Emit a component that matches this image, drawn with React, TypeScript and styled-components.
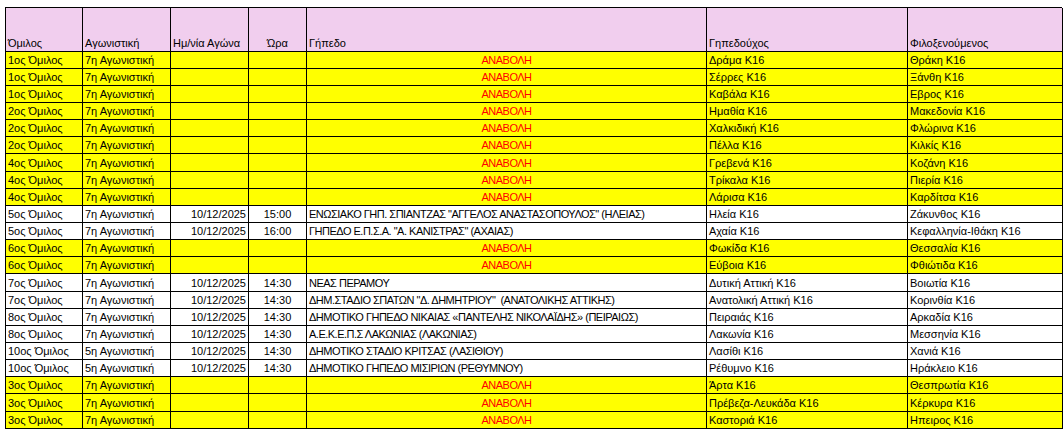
import React from "react";
import styled, { createGlobalStyle } from "styled-components";

const GlobalStyle = createGlobalStyle`
  html, body { margin: 0; padding: 0; background: #ffffff; }
  body { font-family: "Liberation Sans", Arial, sans-serif; }
`;

const COLS = "77px 88px 78px 58px 400px 201px 155px";

const Sheet = styled.div`
  padding: 7px 0 0 5px;
`;

const Grid = styled.div`
  width: 1057px;
  border-left: 1px solid #000;
  border-top: 1px solid #000;
  box-sizing: border-box;
`;

const Row = styled.div<{ $bg: string; $h: number }>`
  display: grid;
  grid-template-columns: ${COLS};
  height: ${(p) => p.$h}px;
  background: ${(p) => p.$bg};
`;

const Cell = styled.div<{
  $align?: "left" | "center" | "right";
  $red?: boolean;
  $caps?: boolean;
}>`
  display: flex;
  align-items: flex-end;
  justify-content: ${(p) =>
    p.$align === "center" ? "center" : p.$align === "right" ? "flex-end" : "flex-start"};
  border-right: 1px solid #000;
  border-bottom: 1px solid #000;
  padding: 0 2px 1px 2px;
  box-sizing: border-box;
  font-size: 11px;
  line-height: 13px;
  letter-spacing: ${(p) => (p.$caps ? "-0.5px" : "0")};
  color: ${(p) => (p.$red ? "#ff0000" : "#000")};
  white-space: nowrap;
  overflow: hidden;
`;

type Match = {
  group: string;
  round: string;
  date?: string;
  time?: string;
  venue?: string;
  home: string;
  away: string;
};

const P = "ΑΝΑΒΟΛΗ";

const rows: Match[] = [
  { group: "1ος Όμιλος", round: "7η Αγωνιστική", home: "Δράμα Κ16", away: "Θράκη Κ16" },
  { group: "1ος Όμιλος", round: "7η Αγωνιστική", home: "Σέρρες Κ16", away: "Ξάνθη Κ16" },
  { group: "1ος Όμιλος", round: "7η Αγωνιστική", home: "Καβάλα Κ16", away: "Εβρος Κ16" },
  { group: "2ος Όμιλος", round: "7η Αγωνιστική", home: "Ημαθία Κ16", away: "Μακεδονία Κ16" },
  { group: "2ος Όμιλος", round: "7η Αγωνιστική", home: "Χαλκιδική Κ16", away: "Φλώρινα Κ16" },
  { group: "2ος Όμιλος", round: "7η Αγωνιστική", home: "Πέλλα Κ16", away: "Κιλκίς Κ16" },
  { group: "4ος Όμιλος", round: "7η Αγωνιστική", home: "Γρεβενά Κ16", away: "Κοζάνη Κ16" },
  { group: "4ος Όμιλος", round: "7η Αγωνιστική", home: "Τρίκαλα Κ16", away: "Πιερία Κ16" },
  { group: "4ος Όμιλος", round: "7η Αγωνιστική", home: "Λάρισα Κ16", away: "Καρδίτσα Κ16" },
  {
    group: "5ος Όμιλος", round: "7η Αγωνιστική", date: "10/12/2025", time: "15:00",
    venue: "ΕΝΩΣΙΑΚΟ ΓΗΠ. ΣΠΙΑΝΤΖΑΣ \"ΑΓΓΕΛΟΣ ΑΝΑΣΤΑΣΟΠΟΥΛΟΣ\" (ΗΛΕΙΑΣ)",
    home: "Ηλεία Κ16", away: "Ζάκυνθος Κ16",
  },
  {
    group: "5ος Όμιλος", round: "7η Αγωνιστική", date: "10/12/2025", time: "16:00",
    venue: "ΓΗΠΕΔΟ Ε.Π.Σ.Α. \"Α. ΚΑΝΙΣΤΡΑΣ\" (ΑΧΑΙΑΣ)",
    home: "Αχαία Κ16", away: "Κεφαλληνία-Ιθάκη Κ16",
  },
  { group: "6ος Όμιλος", round: "7η Αγωνιστική", home: "Φωκίδα Κ16", away: "Θεσσαλία Κ16" },
  { group: "6ος Όμιλος", round: "7η Αγωνιστική", home: "Εύβοια Κ16", away: "Φθιώτιδα Κ16" },
  {
    group: "7ος Όμιλος", round: "7η Αγωνιστική", date: "10/12/2025", time: "14:30",
    venue: "ΝΕΑΣ ΠΕΡΑΜΟΥ", home: "Δυτική Αττική Κ16", away: "Βοιωτία Κ16",
  },
  {
    group: "7ος Όμιλος", round: "7η Αγωνιστική", date: "10/12/2025", time: "14:30",
    venue: "ΔΗΜ.ΣΤΑΔΙΟ ΣΠΑΤΩΝ \"Δ. ΔΗΜΗΤΡΙΟΥ\"\u00a0\u00a0(ΑΝΑΤΟΛΙΚΗΣ ΑΤΤΙΚΗΣ)",
    home: "Ανατολική Αττική Κ16", away: "Κορινθία Κ16",
  },
  {
    group: "8ος Όμιλος", round: "7η Αγωνιστική", date: "10/12/2025", time: "14:30",
    venue: "ΔΗΜΟΤΙΚΟ ΓΗΠΕΔΟ ΝΙΚΑΙΑΣ «ΠΑΝΤΕΛΗΣ ΝΙΚΟΛΑΪΔΗΣ» (ΠΕΙΡΑΙΩΣ)",
    home: "Πειραιάς Κ16", away: "Αρκαδία Κ16",
  },
  {
    group: "8ος Όμιλος", round: "7η Αγωνιστική", date: "10/12/2025", time: "14:30",
    venue: "Α.Ε.Κ.Ε.Π.Σ ΛΑΚΩΝΙΑΣ (ΛΑΚΩΝΙΑΣ)", home: "Λακωνία Κ16", away: "Μεσσηνία Κ16",
  },
  {
    group: "10ος Όμιλος", round: "5η Αγωνιστική", date: "10/12/2025", time: "14:30",
    venue: "ΔΗΜΟΤΙΚΟ ΣΤΑΔΙΟ ΚΡΙΤΣΑΣ (ΛΑΣΙΘΙΟΥ)", home: "Λασίθι Κ16", away: "Χανιά Κ16",
  },
  {
    group: "10ος Όμιλος", round: "5η Αγωνιστική", date: "10/12/2025", time: "14:30",
    venue: "ΔΗΜΟΤΙΚΟ ΓΗΠΕΔΟ ΜΙΣΙΡΙΩΝ (ΡΕΘΥΜΝΟΥ)", home: "Ρέθυμνο Κ16", away: "Ηράκλειο Κ16",
  },
  { group: "3ος Όμιλος", round: "7η Αγωνιστική", home: "Άρτα Κ16", away: "Θεσπρωτία Κ16" },
  { group: "3ος Όμιλος", round: "7η Αγωνιστική", home: "Πρέβεζα-Λευκάδα Κ16", away: "Κέρκυρα Κ16" },
  { group: "3ος Όμιλος", round: "7η Αγωνιστική", home: "Καστοριά Κ16", away: "Ηπειρος Κ16" },
];

// fractional row heights to mimic Excel zoom (~17.15px)
const rowHeight = (i: number) => (i % 7 === 6 ? 18 : 17);

export default function App() {
  return (
    <>
      <GlobalStyle />
      <Sheet>
        <Grid>
          <Row $bg="#f1ceee" $h={44}>
            <Cell>Όμιλος</Cell>
            <Cell>Αγωνιστική</Cell>
            <Cell>Ημ/νία Αγώνα</Cell>
            <Cell $align="center">Ώρα</Cell>
            <Cell>Γήπεδο</Cell>
            <Cell>Γηπεδούχος</Cell>
            <Cell>Φιλοξενούμενος</Cell>
          </Row>
          {rows.map((r, i) => {
            const postponed = !r.venue;
            return (
              <Row key={i} $bg={postponed ? "#ffff00" : "#ffffff"} $h={rowHeight(i)}>
                <Cell>{r.group}</Cell>
                <Cell>{r.round}</Cell>
                <Cell $align="right">{r.date ?? ""}</Cell>
                <Cell $align="center">{r.time ?? ""}</Cell>
                {postponed ? (
                  <Cell $align="center" $red $caps>
                    {P}
                  </Cell>
                ) : (
                  <Cell $caps>{r.venue}</Cell>
                )}
                <Cell>{r.home}</Cell>
                <Cell>{r.away}</Cell>
              </Row>
            );
          })}
        </Grid>
      </Sheet>
    </>
  );
}
